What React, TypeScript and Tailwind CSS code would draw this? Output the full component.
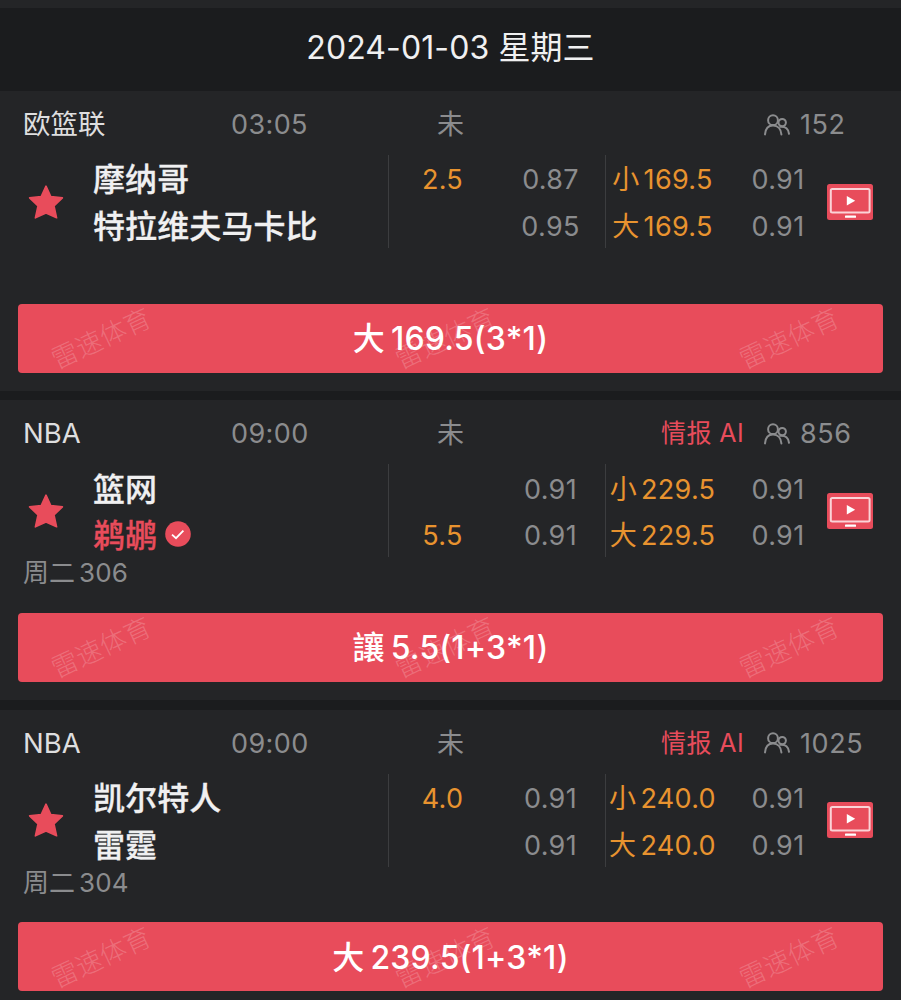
import React from "react";

interface Odds {
  handicap: string;
  price: string;
  side: string;
  total: string;
  totalPrice: string;
}

interface Match {
  id: number;
  league: string;
  time: string;
  viewers: number;
  hasIntel?: boolean;
  home: string;
  away: string;
  awayPicked?: boolean;
  code?: string;
  odds: Odds[];
  tip: { label: string; value: string };
}

const matches: Match[] = [
  {
    id: 1,
    league: "欧篮联",
    time: "03:05",
    viewers: 152,
    home: "摩纳哥",
    away: "特拉维夫马卡比",
    odds: [
      { handicap: "2.5", price: "0.87", side: "小", total: "169.5", totalPrice: "0.91" },
      { handicap: "", price: "0.95", side: "大", total: "169.5", totalPrice: "0.91" },
    ],
    tip: { label: "大", value: "169.5(3*1)" },
  },
  {
    id: 2,
    league: "NBA",
    time: "09:00",
    viewers: 856,
    hasIntel: true,
    home: "篮网",
    away: "鹈鹕",
    awayPicked: true,
    code: "306",
    odds: [
      { handicap: "", price: "0.91", side: "小", total: "229.5", totalPrice: "0.91" },
      { handicap: "5.5", price: "0.91", side: "大", total: "229.5", totalPrice: "0.91" },
    ],
    tip: { label: "讓", value: "5.5(1+3*1)" },
  },
  {
    id: 3,
    league: "NBA",
    time: "09:00",
    viewers: 1025,
    hasIntel: true,
    home: "凯尔特人",
    away: "雷霆",
    code: "304",
    odds: [
      { handicap: "4.0", price: "0.91", side: "小", total: "240.0", totalPrice: "0.91" },
      { handicap: "", price: "0.91", side: "大", total: "240.0", totalPrice: "0.91" },
    ],
    tip: { label: "大", value: "239.5(1+3*1)" },
  },
];

function StarIcon() {
  return (
    <svg viewBox="0 0 36 36" className="h-9 w-9 shrink-0" fill="#e84c5b" stroke="#e84c5b" strokeWidth="1.6" strokeLinejoin="round">
      <path d="M18 2.2 L22.8 12.6 L34.4 13.9 L26 21.8 L28.6 33.8 L18 29 L7.4 33.8 L10 21.8 L1.6 13.9 L13.2 12.6 Z" />
    </svg>
  );
}

function ViewersIcon() {
  return (
    <svg viewBox="0 0 26 22" className="h-[22px] w-[26px] shrink-0" fill="none" stroke="#8b8c8e" strokeWidth="2" strokeLinecap="round">
      <circle cx="9" cy="6.2" r="4.9" />
      <path d="M1 20.4 C1.4 15 4.2 11.4 9 11.4 C13.8 11.4 17 15 17.4 20.4" />
      <circle cx="18.2" cy="8.6" r="3.7" />
      <path d="M16.4 12.8 C21.4 12.2 24.6 15 25 19.8" />
    </svg>
  );
}

function LiveIcon() {
  return (
    <svg viewBox="0 0 46 36" className="h-9 w-[46px] shrink-0">
      <rect width="46" height="36" rx="2.5" fill="#e84c5b" />
      <rect x="3.8" y="4.9" width="38.8" height="23.6" rx="1.5" fill="none" stroke="#fbd3d7" strokeWidth="2" />
      <path d="M19.8 12 L28.2 16.8 L19.8 21.6 Z" fill="#fff" />
      <rect x="18" y="31.4" width="11" height="2.4" rx="0.6" fill="#fff" />
    </svg>
  );
}

function PickedIcon() {
  return (
    <svg viewBox="0 0 26 26" className="-mt-1 h-[26px] w-[26px] shrink-0">
      <circle cx="13" cy="13" r="12.8" fill="#e84c5b" />
      <path d="M7 13.6 L11 17.2 L18.4 9.6" fill="none" stroke="#fff" strokeWidth="1.8" />
    </svg>
  );
}

function Watermark() {
  return (
    <span className="block w-[110px] -rotate-[25deg] text-center text-[26.5px] leading-none font-light whitespace-nowrap text-white/20">
      雷速体育
    </span>
  );
}

function OddsRow({ row }: { row: Odds }) {
  return (
    <div className="flex h-[46.5px] items-center pt-[3px] text-center text-[27px] leading-none tracking-[0.3px]">
      <span className="w-[109px] text-[#e8932f]">{row.handicap}</span>
      <span className="w-[107px] text-[#8b8c8e]">{row.price}</span>
      <span className="flex w-[117px] items-center justify-center gap-1 text-[#e8932f]">
        <span>{row.side}</span>
        <span>{row.total}</span>
      </span>
      <span className="w-[114px] text-[#8b8c8e]">{row.totalPrice}</span>
    </div>
  );
}

function MatchCard({ match }: { match: Match }) {
  return (
    <section className="flex h-[300px] flex-col bg-[#242527]">
      <div className="flex h-16 items-center pt-[3px] pl-6 text-[27px] leading-none text-[#8b8c8e]">
        <span className="-ml-px w-[208px] text-[27.5px] text-[#dededf]">{match.league}</span>
        <span className="w-[206px] tracking-[0.4px]">{match.time}</span>
        <span>未</span>
        <div className="ml-auto flex items-center">
          {match.hasIntel && (
            <span className="mr-5 text-[25px] tracking-[0.4px] text-[#e84c5b]">情报 AI</span>
          )}
          <ViewersIcon />
          <span className="ml-2.5 w-[101px] tracking-[0.6px]">{match.viewers}</span>
        </div>
      </div>

      <div className="flex h-[93px] items-center">
        <div className="flex w-[388px] items-center pl-7">
          <StarIcon />
          <div className="ml-[29px] text-[32px] font-medium tracking-[0.1px] text-[#f0f0f1] [-webkit-text-stroke:0.3px]">
            <div className="flex h-[46.5px] items-center pt-1 leading-none">{match.home}</div>
            <div className="flex h-[46.5px] items-center gap-2 pt-1 leading-none">
              <span className={match.awayPicked ? "text-[#e84c5b]" : ""}>{match.away}</span>
              {match.awayPicked && <PickedIcon />}
            </div>
          </div>
        </div>
        <div className="relative">
          <div className="absolute top-0 left-0 h-full w-px bg-[#3c3d3f]" />
          <div className="absolute top-0 left-[217px] h-full w-px bg-[#3c3d3f]" />
          {match.odds.map((row, i) => (
            <OddsRow key={i} row={row} />
          ))}
        </div>
        <div className="-ml-2">
          <LiveIcon />
        </div>
      </div>

      <div className="flex h-[55.5px] items-start gap-1 pt-[3px] pl-[23px] text-[26px] leading-none text-[#8b8c8e]">
        {match.code && (
          <>
            <span>周二</span>
            <span className="tracking-[0.1px]">{match.code}</span>
          </>
        )}
      </div>

      <button className="relative mx-[18px] flex h-[69px] items-center justify-center rounded bg-[#e84c5b] text-[32px] leading-none font-medium text-white">
        <span className="flex items-center gap-1.5 pt-[2px] tracking-[0.2px] [font-feature-settings:'calt'_0]">
          <span>{match.tip.label}</span>
          <span>{match.tip.value}</span>
        </span>
        <span className="absolute inset-0 flex items-center justify-between pr-[39px] pl-7">
          <Watermark />
          <Watermark />
          <Watermark />
        </span>
      </button>
    </section>
  );
}

export default function App() {
  return (
    <div className="h-[1000px] w-[901px] overflow-hidden bg-[#1b1c1e] font-['Inter','Noto_Sans_CJK_SC',sans-serif]">
      <div className="h-2 bg-[#242527]" />
      <header className="flex h-[83px] items-center justify-center pb-[3px] text-[32px] leading-none tracking-[0.1px] text-[#f0f0f1]">
        2024-01-03 星期三
      </header>
      <main className="flex flex-col gap-[9.4px]">
        {matches.map((match) => (
          <MatchCard key={match.id} match={match} />
        ))}
      </main>
    </div>
  );
}
